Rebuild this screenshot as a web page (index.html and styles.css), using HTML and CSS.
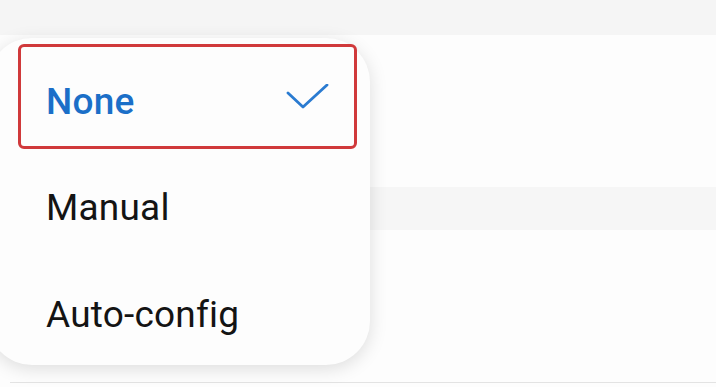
FILE: index.html
```html
<!DOCTYPE html>
<html lang="en">
<head>
  <meta charset="UTF-8" />
  <title>Proxy</title>
  <meta name="viewport" content="width=device-width, initial-scale=1" />
  <link rel="stylesheet" href="styles.css">
</head>
<body>
  <div class="screen">
    <div class="top-bar"></div>

    <div class="settings">
      <div class="setting-row"></div>
      <div class="section-gap"></div>
      <div class="setting-row"></div>
      <div class="divider"></div>
    </div>

    <!-- Proxy popup menu -->
    <div class="popup-menu">
      <div class="menu-item selected">
        <span>None</span>
        <svg class="check" width="44" height="30" viewBox="0 0 44 30">
          <polyline points="3,9 18,23 42,1" fill="none" stroke="#2a7bd1" stroke-width="2.8" stroke-linecap="round" stroke-linejoin="round" />
        </svg>
      </div>
      <div class="menu-item">
        <span>Manual</span>
      </div>
      <div class="menu-item">
        <span>Auto-config</span>
      </div>
    </div>
  </div>
</body>
</html>
```

FILE: styles.css
```css
body {
  margin: 0;
  font-family: Roboto, "Noto Sans", sans-serif;
  background: #fdfdfd;
  overflow: hidden;
}

.screen {
  position: relative;
  width: 716px;
  height: 387px;
}

.top-bar {
  height: 35px;
  background: #f5f5f5;
}

.setting-row {
  height: 152px;
  background: #fdfdfd;
}

.section-gap {
  height: 43px;
  background: #f6f6f6;
}

.divider {
  height: 1px;
  margin-left: 10px;
  background: #e3e3e3;
}

/* Popup menu over the settings list */
.popup-menu {
  position: absolute;
  top: 38px;
  left: -12px;
  width: 382px;
  height: 327px;
  box-sizing: border-box;
  padding: 6px 13px 0 30px;
  background: #fdfdfd;
  border-radius: 44px;
  box-shadow: 0 4px 18px rgba(0, 0, 0, 0.13);
}

.menu-item {
  display: flex;
  align-items: center;
  justify-content: space-between;
  height: 107px;
  box-sizing: border-box;
  padding: 10px 28px 0 25px;
  font-size: 37px;
  letter-spacing: 0.2px;
  color: #141414;
  border: 3px solid transparent;
}

.menu-item.selected {
  height: 105px;
  color: #1b6fc8;
  font-weight: 500;
  border-color: #d0393b;
  border-radius: 6px;
}

.menu-item .check {
  margin-right: -3px;
  margin-top: -6px;
}
```
